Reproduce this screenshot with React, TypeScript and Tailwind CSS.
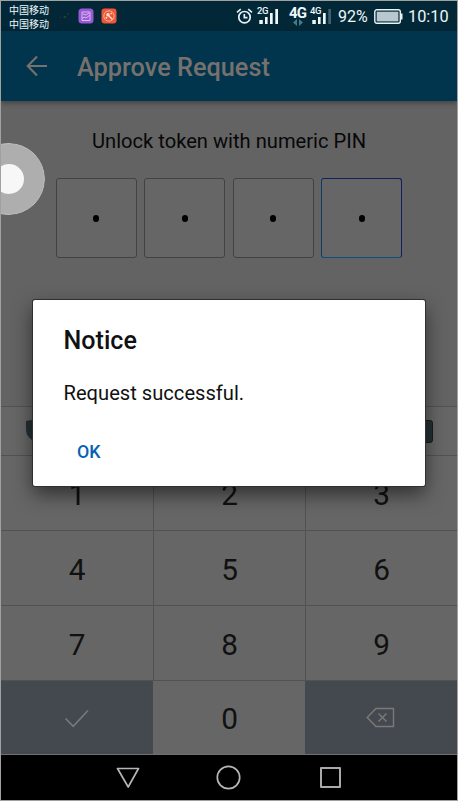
import React from "react";

const keys = ["1", "2", "3", "4", "5", "6", "7", "8", "9"];

function AlarmIcon() {
  return (
    <svg className="h-[17px] w-[17px] shrink-0" viewBox="0 0 17 17" fill="none" stroke="#e4f1f6" strokeWidth="1.7">
      <circle cx="8.5" cy="9.2" r="5.7" />
      <path d="M1 4.3 4.8 1.2M16 4.3 12.2 1.2M8.3 6v3.6h3.2" />
    </svg>
  );
}

function Signal({ label, weak }: { label: string; weak?: boolean }) {
  return (
    <div className="relative h-[19px] w-[22px] shrink-0">
      <span className="absolute left-0 top-[1px] text-[9.5px] leading-[9px] font-medium tracking-[-0.5px]">{label}</span>
      <svg className="absolute inset-0" width="22" height="19" viewBox="0 0 22 19" fill="#f0f8fb">
        <path d="M2.3 15h3.5v4H2.3zM8 12h2.6v7H8zM13 8h2.7v11H13z" />
        <path d="M18.3 4H21v15h-2.7z" fill={weak ? "#41606f" : "#f0f8fb"} />
      </svg>
    </div>
  );
}

function StatusBar() {
  return (
    <div className="flex h-[30px] shrink-0 items-start bg-[#022838] text-[#eef7fa]">
      <div className="ml-[8px] mt-[2px] w-[42px] whitespace-nowrap font-['Noto_Sans_CJK_SC',sans-serif] text-[10px] leading-[13.5px]">
        <div>中国移动</div>
        <div>中国移动</div>
      </div>
      <svg className="ml-[9px] mt-[11px]" width="10" height="8" viewBox="0 0 10 8" fill="none" stroke="#303835">
        <path d="M0 5.5h1M4 4.5h2v1H4zM7 2h2" />
      </svg>
      <svg className="ml-[8px] mt-[7px]" width="16" height="16" viewBox="0 0 16 16" fill="none">
        <rect x=".5" y=".5" width="15" height="15" rx="3.5" fill="#9859d4" />
        <path d="M4 4h8v8.5H4zM4 11l2-2 2 1 4-3M5 6l3 1 3-2" stroke="#ddb9f2" />
      </svg>
      <svg className="ml-[7px] mt-[7px]" width="16" height="16" viewBox="0 0 16 16" fill="none">
        <rect x=".5" y=".5" width="15" height="15" rx="3" fill="#ed5636" />
        <circle cx="8" cy="8" r="5.2" stroke="#f6ae98" />
        <circle cx="7" cy="6.7" r="1.7" fill="#ffe0d3" />
        <path d="m7.5 7.5 4 4M4.8 10.5 6 9M9.5 6l1.5-1" stroke="#ffe0d3" strokeWidth="1.3" />
      </svg>
      <div className="mt-[7px] ml-[119px]"><AlarmIcon /></div>
      <div className="ml-[4px] mt-[4px]"><Signal label="2G" /></div>
      <div className="ml-[10px] mt-[5px] w-[18px]">
        <div className="text-[15px] leading-[14px] font-bold tracking-[-0.8px] whitespace-nowrap">4G</div>
        <svg className="ml-[3px] mt-[-1px]" width="12" height="7" viewBox="0 0 12 7" fill="#47798d">
          <path d="M5 0v7L1 3.5zM7 0v7l4-3.5z" />
        </svg>
      </div>
      <div className="ml-[3px] mt-[4px]"><Signal label="4G" weak /></div>
      <div className="ml-[6px] mt-[6px] w-[33px] whitespace-nowrap text-[16px] leading-5">92%</div>
      <svg className="ml-[3px] mt-[8px] shrink-0" width="29" height="16" viewBox="0 0 29 16" fill="none">
        <rect x=".8" y=".8" width="25.5" height="13.5" rx="2" stroke="#e8f3f6" strokeWidth="1.4" />
        <rect x="2.7" y="2.7" width="21.7" height="9.7" fill="#b9c8ce" />
        <path d="M27 4.5h1.5v6H27z" fill="#e8f3f6" />
      </svg>
      <div className="ml-[5px] mt-[6px] whitespace-nowrap text-[16.3px] leading-5">10:10</div>
    </div>
  );
}

function PinRow() {
  return (
    <div className="ml-[54.5px] mt-[23px] flex gap-[7.5px]">
      {[0, 1, 2, 3].map((i) => (
        <div
          key={i}
          className={`flex h-[80px] w-[81px] items-center justify-center rounded-[3px] border bg-[#666666] ${
            i === 3 ? "border-[#0d3a68] border-t-[#101f5d] border-r-[#101f5d] border-b-[#07517a]" : "border-[#424242]"
          }`}
        >
          <span className="mt-[1px] h-[7px] w-[6px] rounded-[3px] bg-black" />
        </div>
      ))}
    </div>
  );
}

const digitClass = "text-[29.8px] leading-none text-[#111111]";

function Keypad() {
  return (
    <div className="grid h-[299px] shrink-0 grid-cols-3 grid-rows-[75px_75px_75px_74px] bg-[#666666]">
      {keys.map((key, i) => (
        <button
          key={key}
          className={`flex items-center justify-center border-b border-[#525252] pt-[3px] ${digitClass} ${
            i % 3 > 0 ? "border-l" : ""
          }`}
        >
          {key}
        </button>
      ))}
      <button className="flex items-center justify-center border-b border-[#707070] bg-[#444950]">
        <svg width="26" height="20" viewBox="0 0 26 20" fill="none" stroke="#77797b" strokeWidth="1.6">
          <path d="m1.5 10.5 7.7 7.8L24 2.5" />
        </svg>
      </button>
      <button className={`flex items-center justify-center border-b border-[#707070] pt-[3px] pl-[1px] ${digitClass}`}>0</button>
      <button className="flex items-center justify-center border-b border-[#707070] bg-[#444950] pr-[1px]">
        <svg width="29" height="21" viewBox="0 0 29 21" fill="none" stroke="#7c7a78" strokeWidth="1.4">
          <path d="M10 1.5h17.5v18H10L1.2 10.5zM12.5 6.5l8 8M20.5 6.5l-8 8" />
        </svg>
      </button>
    </div>
  );
}

export default function App() {
  return (
    <div className="relative flex h-[801px] w-[458px] flex-col overflow-hidden border border-[#a1a1a1] bg-[#636363] font-['Roboto','Liberation_Sans',sans-serif]">
      <StatusBar />
      <header className="z-10 flex h-[70px] shrink-0 items-center bg-[#01354d] shadow-[0_2px_5px_rgba(0,0,0,0.35)]">
        <svg className="ml-[25px]" width="22" height="22" viewBox="0 0 22 22" fill="none" stroke="#77716e" strokeWidth="2.1">
          <path d="M21 11H2M11 1.5 1.7 11l9.3 9.5" />
        </svg>
        <h1 className="ml-[29px] mt-[3px] whitespace-nowrap text-[25.3px] leading-8 font-medium text-[#77716e]">Approve Request</h1>
      </header>
      <main className="h-[305px] shrink-0">
        <p className="mt-[27px] text-center text-[20.15px] leading-[26px] text-[#080808]">Unlock token with numeric PIN</p>
        <div className="pt-[1px]"><PinRow /></div>
      </main>
      <div className="flex h-[50px] shrink-0 items-center justify-between border-y border-[#525252] bg-[#666666] pl-[25px] pr-[24px]">
        <svg width="24" height="24" viewBox="0 0 24 24" fill="#253033">
          <path d="M0 2 11 0l12 2v9q0 8-12 13Q0 19 0 11z" />
        </svg>
        <span className="h-[23px] w-[24px] rounded-[3px] border border-[#151e20] bg-[#253033]" />
      </div>
      <Keypad />
      <nav className="flex h-[45px] shrink-0 items-center bg-black">
        <svg className="ml-[114.5px]" width="25" height="22" viewBox="0 0 25 22" fill="none" stroke="#b5b5b5" strokeWidth="1.7">
          <path d="M1.5 1.5h21L12.2 20z" strokeLinejoin="round" />
        </svg>
        <svg className="ml-[75.5px]" width="25" height="25" viewBox="0 0 25 25" fill="none" stroke="#b5b5b5" strokeWidth="1.7">
          <circle cx="12.5" cy="12.5" r="11.2" />
        </svg>
        <span className="ml-[78.5px] h-[21px] w-[21px] rounded-[1px] border-2 border-[#aaaaaa]" />
      </nav>

      <div className="absolute left-0 top-[142px] h-[72px] w-[44px] overflow-hidden rounded-r-[36px]">
        <div className="absolute -left-[28px] top-0 flex h-[72px] w-[72px] items-center justify-center rounded-full border border-[#c0c0c0] bg-[#aeaeae]">
          <span className="h-[30px] w-[30px] rounded-full bg-[#f7f7f7]" />
        </div>
      </div>

      <section role="dialog" className="absolute left-[32px] top-[299px] z-20 h-[186px] w-[392px] rounded-[2px] bg-white pl-[30.5px] text-[#111111] shadow-[0_0_0_1px_#303030,0_8px_20px_rgba(0,0,0,0.55)]">
        <h2 className="mt-[25px] text-[25.1px] leading-8 font-medium">Notice</h2>
        <p className="mt-[23px] text-[20.15px] leading-[26px]">Request successful.</p>
        <button className="ml-[13.5px] mt-[34px] block text-[17.8px] leading-6 font-medium text-[#0562b5]">OK</button>
      </section>
    </div>
  );
}
